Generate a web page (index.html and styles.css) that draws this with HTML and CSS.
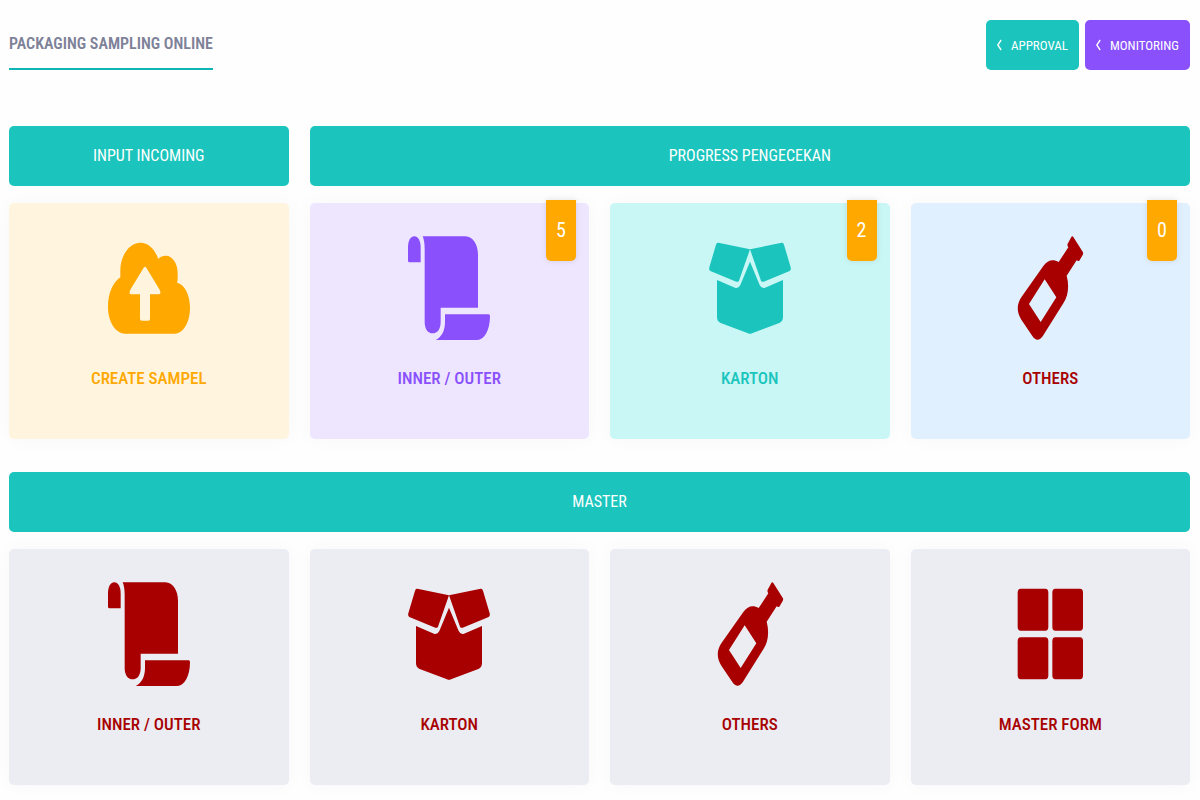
FILE: index.html
```html
<!DOCTYPE html>
<html lang="id">
<head>
  <meta charset="utf-8">
  <meta name="viewport" content="width=device-width, initial-scale=1.0">
  <title>Packaging Sampling Online</title>
  <link rel="stylesheet" href="styles.css">
</head>
<body>

  <!-- Shared icons -->
  <svg class="icon-defs" aria-hidden="true">
    <symbol id="icon-upload" viewBox="0 0 246 312" preserveAspectRatio="none">
      <path fill-rule="evenodd" d="M52 293C23 293 0 258 0 213C0 172 14 140 37 124V104C37 58 64 20 98 20C121 20 141 40 151 69C157 62 165 59 173 59C193 59 209 82 209 110C209 121 210 131 207 140C230 145 246 176 246 216C246 260 225 293 200 293ZM107 95L67 161Q61 175 70 175H96V248Q96 254 101 254H121Q126 254 126 248V175H152Q161 175 155 161L115 95Q111 89 107 95Z"/>
    </symbol>
    <symbol id="icon-scroll" viewBox="0 0 246 312" preserveAspectRatio="none">
      <path d="M0 74V35C0 13 8 1 19 1S38 14 38 35V79H5Q0 79 0 74Z"/>
      <path d="M44 1H172C195 1 210 26 210 56V215H98V258C98 280 88 292 74 292S50 280 50 258V40C50 22 48 10 44 1Z"/>
      <path d="M111 235H242Q246 235 246 240C246 284 228 312 208 312H83C102 303 111 282 111 258Z"/>
    </symbol>
    <symbol id="icon-box" viewBox="0 0 246 312" preserveAspectRatio="none">
      <path d="M28 20L123 40L90 134Q87 139 82 137L4 105Q-1 102 1 94L21 26Q23 19 28 20Z"/>
      <path d="M218 20L123 40L156 134Q159 139 164 137L242 105Q247 102 245 94L225 26Q223 19 218 20Z"/>
      <path d="M24 132L78 155Q88 159 94 147L123 77L152 147Q158 159 168 155L222 132V243Q222 256 211 261L129 292Q123 295 117 292L35 261Q24 256 24 243Z"/>
    </symbol>
    <symbol id="icon-bottle" viewBox="0 0 246 312" preserveAspectRatio="none">
      <path fill-rule="evenodd" d="M187 3Q190 -1 193 3L221 47Q224 52 221 57L211 74Q208 77 203 73L173 119C181 148 178 180 163 202L102 299Q86 323 70 300L37 251C22 228 23 203 38 182L103 90C116 71 133 68 149 78L178 34Q174 29 176 23ZM107 130L142 184L95 258L60 204Z"/>
    </symbol>
    <symbol id="icon-grid" viewBox="0 0 246 312" preserveAspectRatio="none">
      <rect x="26" y="20" width="92" height="126" rx="9" ry="12"/>
      <rect x="130" y="20" width="92" height="126" rx="9" ry="12"/>
      <rect x="26" y="166" width="92" height="126" rx="9" ry="12"/>
      <rect x="130" y="166" width="92" height="126" rx="9" ry="12"/>
    </symbol>
    <symbol id="icon-back" viewBox="0 0 6 12" preserveAspectRatio="none">
      <path d="M5 1L1 6L5 11" fill="none" stroke="currentColor" stroke-width="1.6"/>
    </symbol>
  </svg>

  <header class="topbar">
    <h1 class="title">PACKAGING SAMPLING ONLINE</h1>
    <nav class="actions">
      <a href="#" class="btn btn-teal"><svg class="chevron"><use href="#icon-back"/></svg>APPROVAL</a>
      <a href="#" class="btn btn-purple"><svg class="chevron"><use href="#icon-back"/></svg>MONITORING</a>
    </nav>
  </header>

  <main>
    <section class="board">
      <h2 class="bar">INPUT INCOMING</h2>
      <h2 class="bar bar-progress">PROGRESS PENGECEKAN</h2>

      <a href="#" class="card card-orange">
        <svg class="icon"><use href="#icon-upload"/></svg>
        <span class="label">CREATE SAMPEL</span>
      </a>
      <a href="#" class="card card-purple">
        <span class="badge">5</span>
        <svg class="icon"><use href="#icon-scroll"/></svg>
        <span class="label">INNER / OUTER</span>
      </a>
      <a href="#" class="card card-teal">
        <span class="badge">2</span>
        <svg class="icon"><use href="#icon-box"/></svg>
        <span class="label">KARTON</span>
      </a>
      <a href="#" class="card card-blue">
        <span class="badge">0</span>
        <svg class="icon"><use href="#icon-bottle"/></svg>
        <span class="label">OTHERS</span>
      </a>
    </section>

    <section class="board">
      <h2 class="bar bar-full">MASTER</h2>

      <a href="#" class="card card-grey">
        <svg class="icon"><use href="#icon-scroll"/></svg>
        <span class="label">INNER / OUTER</span>
      </a>
      <a href="#" class="card card-grey">
        <svg class="icon"><use href="#icon-box"/></svg>
        <span class="label">KARTON</span>
      </a>
      <a href="#" class="card card-grey">
        <svg class="icon"><use href="#icon-bottle"/></svg>
        <span class="label">OTHERS</span>
      </a>
      <a href="#" class="card card-grey">
        <svg class="icon"><use href="#icon-grid"/></svg>
        <span class="label">MASTER FORM</span>
      </a>
    </section>
  </main>

</body>
</html>
```
FILE: styles.css
```css
* {
  box-sizing: border-box;
}

body {
  margin: 0;
  padding: 20px 10px 15px 9px;
  background-color: #fefefe;
  font-family: "Roboto Condensed", "Liberation Sans Narrow", "Liberation Sans", sans-serif;
}

a {
  text-decoration: none;
}

.icon-defs {
  display: none;
}

/* Header */
.topbar {
  display: flex;
  justify-content: space-between;
  align-items: flex-end;
  margin-bottom: 56px;
}

.title {
  margin: 0;
  padding-bottom: 8px;
  border-bottom: 2px solid #0fb5b5;
  color: #7e8299;
  font-size: 16px;
  font-weight: 600;
  line-height: 32px;
}

.actions {
  display: flex;
  gap: 6px;
}

.btn {
  display: flex;
  align-items: center;
  gap: 9px;
  height: 50px;
  padding: 0 11px;
  border-radius: 5px;
  color: #fff;
  font-size: 13px;
}

.btn-teal {
  background-color: #1bc5bd;
}

.btn-purple {
  background-color: #8950fc;
}

.chevron {
  width: 5px;
  height: 12px;
}

/* Boards */
.board {
  display: grid;
  grid-template-columns: repeat(4, 1fr);
  gap: 17px 21px;
  margin-bottom: 33px;
}

.board:last-child {
  margin-bottom: 0;
}

.bar {
  margin: 0;
  border-radius: 5px;
  background-color: #1bc5bd;
  color: #fff;
  font-size: 16px;
  font-weight: 400;
  line-height: 60px;
  text-align: center;
}

.bar-progress {
  grid-column: span 3;
}

.bar-full {
  grid-column: span 4;
}

.card {
  position: relative;
  display: flex;
  flex-direction: column;
  align-items: center;
  gap: 22px;
  padding: 33px 12px 45px;
  border-radius: 5px;
  box-shadow: 0 0 20px rgba(0, 0, 0, 0.03);
}

.icon {
  width: 82px;
  height: 104px;
  fill: currentColor;
}

.label {
  font-size: 17px;
  font-weight: 500;
  line-height: 32px;
}

.badge {
  position: absolute;
  top: -3px;
  right: 13px;
  width: 30px;
  border-radius: 0 0 5px 5px;
  background-color: #ffa800;
  box-shadow: 0 0 6px rgba(0, 0, 0, 0.1);
  color: #fff;
  font-size: 20px;
  line-height: 61px;
  text-align: center;
}

.card-orange {
  background-color: #fff4de;
  color: #ffa800;
}

.card-purple {
  background-color: #eee5ff;
  color: #8950fc;
}

.card-teal {
  background-color: #c9f7f5;
  color: #1bc5bd;
}

.card-blue {
  background-color: #e1f0ff;
  color: #a80000;
}

.card-grey {
  background-color: #ebedf3;
  color: #a80000;
}
```
